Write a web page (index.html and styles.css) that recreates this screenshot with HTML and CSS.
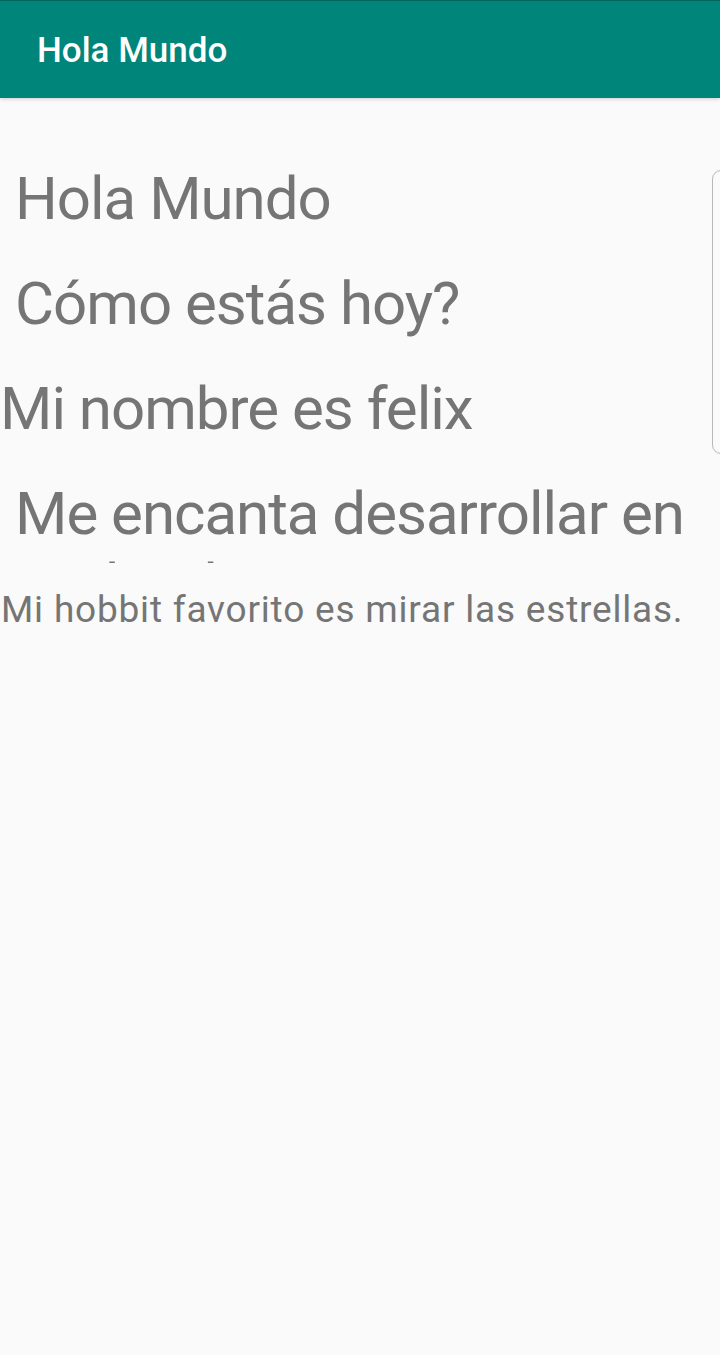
FILE: index.html
```html
<!DOCTYPE html>
<html lang="es">
<head>
<meta charset="utf-8">
<title>Hola Mundo</title>
<link rel="stylesheet" href="styles.css">
</head>
<body>
<header class="appbar">
  <h1 class="appbar-title">Hola Mundo</h1>
</header>
<main class="content">
  <p class="big indent">Hola Mundo</p>
  <p class="big indent">Cómo estás hoy?</p>
  <p class="big">Mi nombre es felix</p>
  <p class="big indent clipped">Me encanta desarrollar en Android</p>
  <p class="small">Mi hobbit favorito es mirar las estrellas.</p>
</main>
<div class="edge-handle"></div>
</body>
</html>
```
FILE: styles.css
```css
html, body {
  margin: 0;
  padding: 0;
}
body {
  width: 720px;
  height: 1355px;
  background: #fafafa;
  font-family: Roboto, "Noto Sans", sans-serif;
  overflow: hidden;
  position: relative;
}
.appbar {
  height: 98px;
  box-sizing: border-box;
  background: #00857a;
  border-top: 1px solid #00665c;
  padding: 29px 0 0 37px;
  box-shadow: 0 1px 4px rgba(0, 0, 0, 0.18);
  position: relative;
  z-index: 1;
}
.appbar-title {
  margin: 0;
  color: #ffffff;
  font-size: 35px;
  font-weight: 500;
  line-height: 41px;
}
.content {
  display: flex;
  flex-direction: column;
  padding-top: 65px;
}
.big {
  margin: 0 0 33px 0;
  font-size: 60px;
  line-height: 72px;
  letter-spacing: -1px;
  color: #757575;
}
.indent {
  padding-left: 15px;
}
.clipped {
  height: 85px;
  overflow: hidden;
  margin-bottom: 25px;
}
.small {
  margin: 0;
  font-size: 37px;
  line-height: 43px;
  letter-spacing: 0.8px;
  color: #757575;
  padding-left: 1px;
}
.edge-handle {
  position: absolute;
  left: 712px;
  top: 170px;
  width: 20px;
  height: 284px;
  border: 1px solid #b8b8b8;
  border-radius: 9px;
  box-sizing: border-box;
}
```
